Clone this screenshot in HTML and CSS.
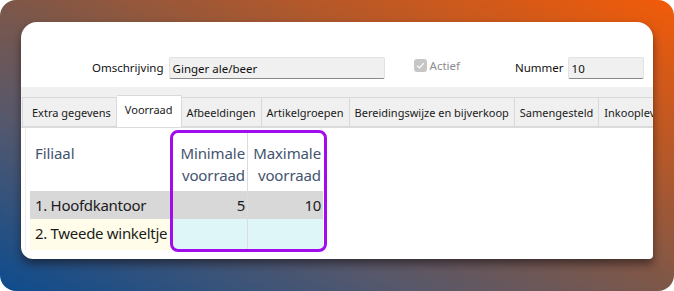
FILE: index.html
```html
<!DOCTYPE html>
<html lang="nl">
<head>
  <meta charset="UTF-8">
  <title>Artikel - Voorraad</title>
  <link rel="stylesheet" href="styles.css">
</head>
<body>
  <div class="frame">
    <div class="card">
      <!-- Article header fields -->
      <div class="fields">
        <label class="label">Omschrijving</label>
        <div class="input input-wide">Ginger ale/beer</div>
        <span class="check">
          <svg width="13" height="13" viewBox="0 0 13 13">
            <rect x="0" y="0" width="13" height="13" rx="3" fill="#c6c6c6"/>
            <path d="M3.2 6.8 L5.5 9 L9.8 4.2" fill="none" stroke="#fff" stroke-width="1.2"/>
          </svg>
        </span>
        <span class="check-label">Actief</span>
        <label class="label label-num">Nummer</label>
        <div class="input input-num">10</div>
      </div>

      <!-- Tab strip -->
      <div class="tabbar">
        <div class="tab tab-first">Extra gegevens</div>
        <div class="tab active">Voorraad</div>
        <div class="tab">Afbeeldingen</div>
        <div class="tab">Artikelgroepen</div>
        <div class="tab">Bereidingswijze en bijverkoop</div>
        <div class="tab">Samengesteld</div>
        <div class="tab">Inkoopleveranciers</div>
      </div>

      <div class="panel">
        <div class="stock">
          <div class="cell head">Filiaal</div>
          <div class="cell head num">Minimale<br>voorraad</div>
          <div class="cell head num sep">Maximale<br>voorraad</div>

          <div class="cell row-a">1. Hoofdkantoor</div>
          <div class="cell row-a num">5</div>
          <div class="cell row-a num sep">10</div>

          <div class="cell row-b name">2. Tweede winkeltje</div>
          <div class="cell row-b edit"></div>
          <div class="cell row-b edit sep"></div>

          <!-- highlight around the stock columns -->
          <div class="highlight"></div>
        </div>
      </div>
    </div>
  </div>
</body>
</html>
```

FILE: styles.css
```css
body {
  margin: 0;
  background: #fff;
  font-family: "Noto Sans", "Open Sans", sans-serif;
}
/* Gradient backdrop */
.frame {
  width: 674px;
  height: 291px;
  box-sizing: border-box;
  padding: 22px 21px 0 21px;
  border-radius: 16px;
  overflow: hidden;
  background: linear-gradient(to top right, #0d4c8e 0%, #56586c 30%, #7d5749 50%, #b3582a 72%, #f25b08 100%);
}
.card {
  height: 237px;
  background: #fff;
  border-radius: 16px 16px 4px 12px;
  box-shadow: 0 5px 9px rgba(20, 15, 20, 0.55);
  overflow: hidden;
}
/* Top fields */
.fields {
  height: 65px;
  box-sizing: border-box;
  padding: 35px 0 0 71px;
  display: flex;
  align-items: flex-start;
  font-size: 11.5px;
  color: #111;
}
.label {
  line-height: 22px;
  margin-right: 5px;
}
.input {
  height: 22px;
  line-height: 21px;
  box-sizing: border-box;
  padding-left: 3px;
  background: #f0f0f0;
  border: 1px solid #e2e2e2;
  border-bottom-color: #8a8a8a;
  border-radius: 2px;
}
.input-wide {
  width: 216px;
}
.input-num {
  width: 76px;
}
.check {
  margin: 2px 3px 0 29px;
  height: 13px;
}
.check-label {
  color: #8c8c8c;
  line-height: 18px;
  margin-right: 55px;
}
.label-num {
  margin-right: 4px;
}
/* Tabs */
.tabbar {
  display: flex;
  align-items: flex-end;
  background: #f0f0f0;
  padding: 9px 0 0 1px;
  height: 41px;
  box-sizing: border-box;
  overflow: hidden;
  border-bottom: 1px solid #dcdcdc;
  font-size: 11px;
  color: #1a1a1a;
}
.tab {
  flex: none;
  height: 30px;
  line-height: 30px;
  box-sizing: border-box;
  padding: 0 5px;
  border: 1px solid #d9d9d9;
  border-left: none;
  white-space: nowrap;
}
.tab-first {
  border-left: 1px solid #d9d9d9;
  padding: 0 5px 0 9px;
}
.tab.active {
  height: 33px;
  margin-bottom: -1px;
  line-height: 28px;
  padding: 0 8px;
  background: #fff;
  border-bottom: none;
}
/* Stock table */
.panel {
  margin-left: 4px;
  border-left: 1px solid #ececec;
  padding: 4px 0 0 4px;
}
.stock {
  position: relative;
  display: grid;
  grid-template-columns: 142px 75px 76px;
  grid-template-rows: 59px 28px 31px;
  font-size: 15px;
  width: 293px;
}
.cell {
  padding: 0 2px 0 5px;
  white-space: nowrap;
  overflow: hidden;
  line-height: 28px;
  letter-spacing: -0.3px;
  color: #1b1b1b;
}
.head {
  color: #42546e;
  line-height: 22px;
  padding-top: 10px;
  letter-spacing: -0.1px;
}
.num {
  text-align: right;
  padding: 0 2px 0 0;
}
.head.num {
  padding-top: 10px;
}
.sep {
  border-left: 1px solid #dcdcdc;
}
.row-a {
  background: #d8d8d8;
}
.row-b.name {
  background: #fffde9;
}
.row-b.edit {
  background: #dff6f9;
}
.highlight {
  position: absolute;
  left: 140px;
  top: -2px;
  width: 157px;
  height: 122px;
  box-sizing: border-box;
  border: 3px solid #a20cec;
  border-radius: 8px;
  pointer-events: none;
}
```
